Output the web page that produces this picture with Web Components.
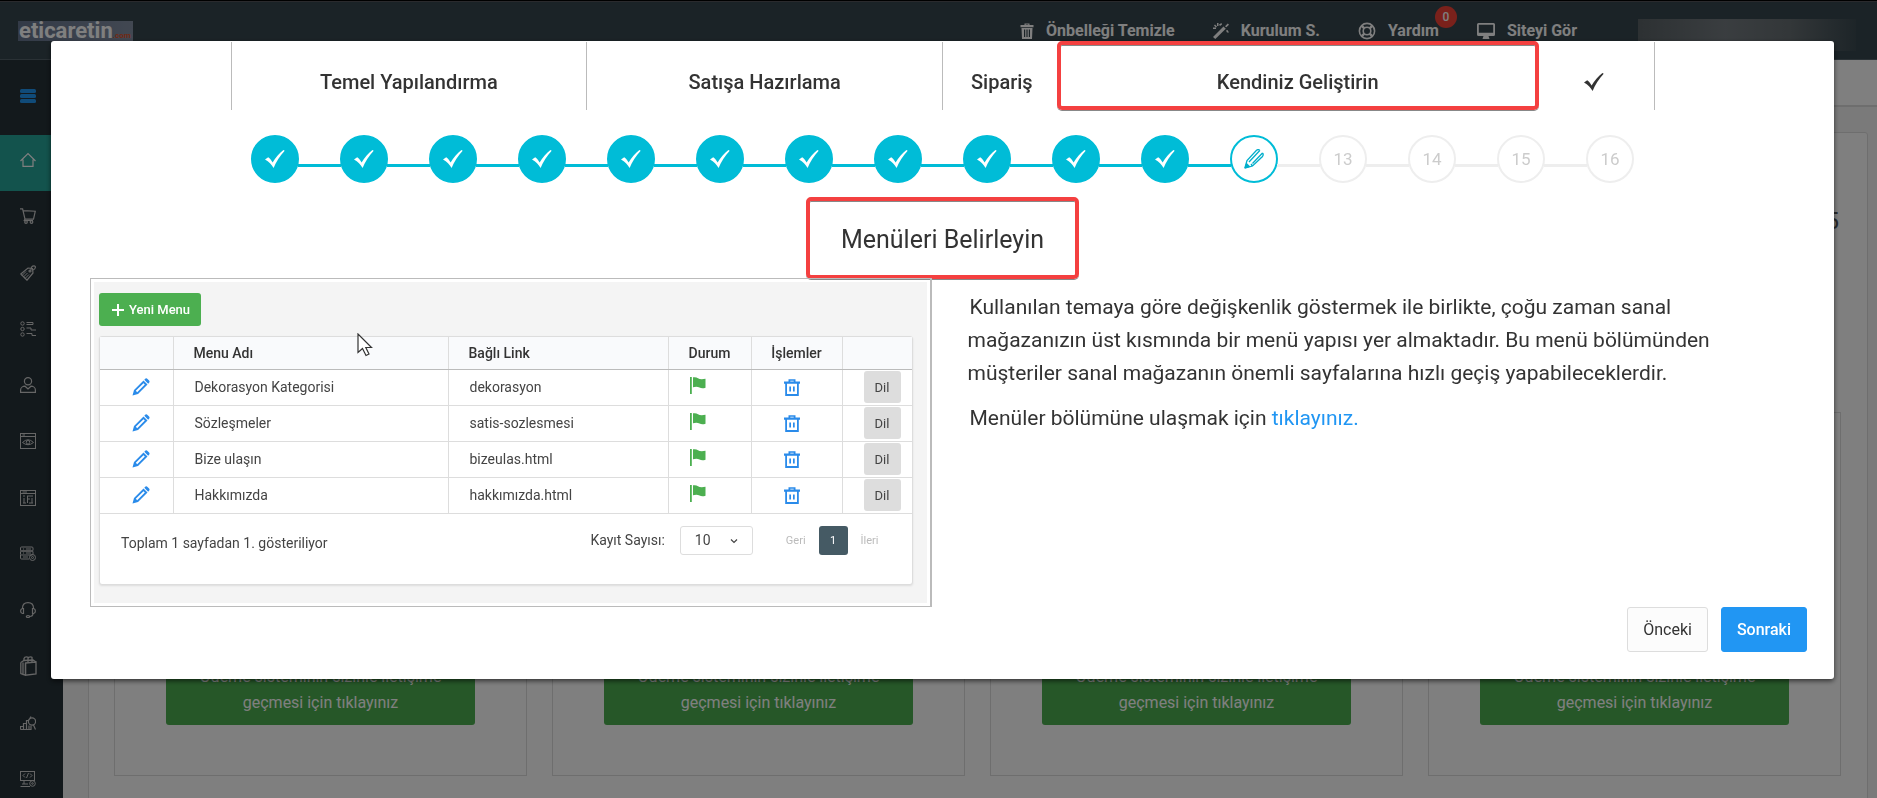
<!DOCTYPE html>
<html lang="tr">
<head>
<meta charset="utf-8">
<title>eticaretin.com – Kurulum Sihirbazı</title>
<meta name="viewport" content="width=device-width, initial-scale=1">
<style>
  body { margin: 0; font-family: Roboto, "Noto Sans", sans-serif; color: #333; background: #f5f5f5; }
</style>
</head>
<body>
<store-admin></store-admin>

<script>
const define = (name, html, setup) => {
  const template = document.createElement('template');
  template.innerHTML = `<style>*{box-sizing:border-box}</style>${html}`;
  customElements.define(name, class extends HTMLElement {
    connectedCallback() {
      if (this.shadowRoot) return;
      const root = this.attachShadow({ mode: 'open' });
      root.append(template.content.cloneNode(true));
      if (setup) setup(this, root);
    }
  });
};

/* Icons: [viewBox, markup]. Line icons are drawn with currentColor strokes. */
const line = (body, w = 1.2) => `<g fill="none" stroke="currentColor" stroke-width="${w}">${body}</g>`;
const ICONS = {
  bars: ['0 0 16 14', '<g fill="currentColor"><rect width="16" height="4" rx="1.5"/><rect y="5" width="16" height="4" rx="1.5"/><rect y="10" width="16" height="4" rx="1.5"/></g>'],
  home: ['0 0 16 16', line('<path d="M.5 9 8 1.6 15.500 9M3 7.500V14.400H13V7.500"/>')],
  cart: ['0 0 16 16', line('<path d="M0 .8H2.600L5 11.200H13.500L15.300 3.200 3.300 2.600"/><circle cx="6" cy="14" r="1.300"/><circle cx="11.500" cy="14" r="1.300"/><path d="M5 11.200 4.300 12.500H13"/>')],
  tags: ['0 0 16 16', line('<path d="M.8 9 8 3 12.500 3.500 13 8 7 15.200Z"/><path d="M2 10.500 6 6.500M3.500 12 7.500 8M5 13.500 9 9.500" stroke-width="1"/><circle cx="10" cy="6" r="1"/><path d="M11 5C11 2 12 .8 14 .8 16 .8 16 4 13 5"/>')],
  list: ['0 0 16 16', line('<circle cx="2.500" cy="2.500" r="1.700"/><circle cx="2.500" cy="8" r="1.700"/><circle cx="2.500" cy="13.500" r="1.700"/><path d="M6.500 1.500H13V3.500H6.500M6.500 7H11V9H16M6.500 12.500H12V14.500H16"/>', 1)],
  user: ['0 0 16 16', line('<circle cx="8" cy="4.200" r="3.600"/><path d="M.6 15.400V13C.6 10.500 3 9.200 5 9.200L8 12 11 9.200C13 9.200 15.400 10.500 15.400 13V15.400Z"/>')],
  eye: ['0 0 16 16', line('<rect x=".5" y=".5" width="15" height="15"/><path d="M.5 3.500H15.500M2.500 2H5M2.500 9.500Q8 4 13.500 9.500 8 14 2.500 9.500Z"/><circle cx="8" cy="9.300" r="1.800"/>', 1)],
  layout: ['0 0 16 16', line('<rect x=".5" y=".5" width="15" height="15"/><path d="M.5 3.500H15.500M2.500 2H7M3 6H5M7 6H13M4 8V13M7.500 6V13M7 9H10M12 8V13M3 13H6M9 13H13"/>', 1)],
  server: ['0 0 16 16', line('<rect x=".5" y="1" width="12.500" height="4" rx="1"/><rect x=".5" y="5" width="12.500" height="4" rx="1"/><path d="M9 13H1.500Q.5 13 .5 12V9M3 3H4M6 3H11M3 7H4M6 7H11M3 11H8"/><circle cx="12.500" cy="11.500" r="3"/><circle cx="12.500" cy="11.500" r="1"/>', 1)],
  headset: ['0 0 16 16', line('<path d="M2.500 7V6C2.500 2.500 5 .6 8 .6S13.500 2.500 13.500 6V7"/><path d="M3.500 6.500V11.500H2.500Q.6 11 .6 9T2.500 6.500ZM12.500 6.500V11.500H13.500Q15.400 11 15.400 9T13.500 6.500ZM13 11.500Q13 14.500 9.500 14.500"/><ellipse cx="8" cy="14.500" rx="1.700" ry="1"/>')],
  bag: ['0 0 17 20', line('<path d="M5.500 7 16 6V18L5.500 19.200Z"/><path d="M5.500 7V19.200M3 6.500V18.500L5.500 19.200M.8 6.500V17.500L3 18.500M.8 6.500 4 4.500 13 4 16 6"/><path d="M4 5V2.500Q4.500.8 6.500.8T8 2.500V6M8 2.500Q8.500.8 10.500.8T12 2.500V6"/>', 1.300)],
  chart: ['0 0 16 14', line('<path d="M.5 13.500V10.500H3.500V13.500M3.500 10.500V7.500H6.500V13.500M6.500 7.500V4.500H9M9 13.500V9.500M.5 13.500H11V10"/><circle cx="12" cy="5.500" r="3.600"/><path d="M10 2 11 .5M13.500 9 15.500 13.500"/>')],
  dev: ['0 0 16 16', line('<rect x=".5" y=".5" width="14" height="9"/><path d="M5 2.500 3 4.500 5 6.500M10 2.500 12 4.500 10 6.500M8.500 2 6.500 7M2 13H8M.5 15.500H10M4 10V13"/><circle cx="12.500" cy="12.500" r="2.800"/><circle cx="12.500" cy="12.500" r=".8"/>', 1)],
  trashTop: ['0 0 14 16', '<path fill="currentColor" fill-rule="evenodd" d="M4.500 2V.5H9.500V2H13.500V4.200H.5V2ZM5.700 2H8.300V1.500H5.700ZM1.500 5H12.500L12 16H2ZM4 6.500V14H5.200V6.500ZM6.400 6.500V14H7.600V6.500ZM8.800 6.500V14H10V6.500Z"/>'],
  wand: ['0 0 16 16', '<g fill="currentColor"><path d="M0 14 10.500 3.500 12.800 5.800 2.300 16Z"/><path d="M12 3.200 13.300 4.300 16 1.800 14.800.6ZM4 0H5.500V3H4ZM1 2.500 2 1.500 4 3.500 3 4.500ZM0 4.500H3V6H0ZM6 1.500 8.500 0 9 1.500 7 3ZM13 7.500 14.500 7 16 9.500H14Z"/></g>'],
  buoy: ['0 0 18 18', line('<circle cx="9" cy="9" r="7.600"/><circle cx="9" cy="9" r="3.800"/><path stroke-width="2.400" d="M3.800 3.800 6.300 6.300M14.200 3.800 11.700 6.300M3.800 14.200 6.300 11.700M14.200 14.200 11.700 11.700"/>', 1.600)],
  monitor: ['0 0 18 16', '<path fill="currentColor" fill-rule="evenodd" d="M1.500 0H16.500Q18 0 18 1.500V11.500Q18 13 16.500 13H11.500L12.500 16H5.500L6.500 13H1.500Q0 13 0 11.500V1.500Q0 0 1.500 0ZM1.800 1.800V9.800H16.200V1.800Z"/>'],
  check: ['0 0 20 18', '<path fill="currentColor" d="M19.700.8C15 6 11 12 8.600 18 6.500 14.700 4 11.500 0 9.600L3.200 7.200C5 8.500 6.500 10.300 7.600 12.400 10.500 7.500 14 3.500 18.400 0Z"/>'],
  pencil: ['0 0 20 20', line('<path d="M.8 19.200 3 11.500 12.500 1.200C14 .2 15.500.6 15.800 1.500M.8 19.200 8.500 17 18.500 7.500C19.500 6 19.300 4.500 18.500 4M5 13 15.800 1.500M18.500 4 8.500 14.500M8.500 17 7 15" stroke-width="1.300"/><path fill="currentColor" stroke="none" d="M.5 19.500 2.300 13.500 6.500 17.800Z"/>')],
  edit: ['0 0 18 18', '<path fill="currentColor" fill-rule="evenodd" d="M.5 17.500 2 12 11.500 2.500 15.500 6.500 6 16ZM3.800 12.700 11.500 5.200 12.800 6.500 5.200 14.200ZM12.300 1.700 13.500.6Q14.500 0 15.500.9L17.100 2.500Q18 3.500 17.300 4.500L16.200 5.700Z"/>'],
  flag: ['0 0 16 17', '<path fill="currentColor" d="M0 0H1.800V17H0ZM3 .3Q6-.3 8 1.200T15.500 1.800V10.800Q12 12 9.500 10.600T3 10.300Z"/>'],
  trash: ['0 0 16 17', '<path fill="currentColor" fill-rule="evenodd" d="M4.500 2.500V.3H11.500V2.500H16V4.700H14.800V17H1.200V4.700H0V2.500ZM6.300 2.500H9.700V1.800H6.300ZM3 4.700V15H13V4.700ZM5.300 7.500H7V12.500H5.300ZM9 7.500H10.700V12.500H9Z"/>'],
  plus: ['0 0 12 12', '<path fill="currentColor" d="M5 0H7V5H12V7H7V12H5V7H0V5H5Z"/>'],
  chevron: ['0 0 8 6', line('<path d="M1 1.500 4 4.500 7 1.500"/>')],
  cursor: ['0 0 16 24', '<path fill="#fff" stroke="#333" stroke-width="1.200" d="M1 1V19.500L5.500 15.500 9 22.500 12 21 8.800 14.500H14.500Z"/>']
};

define('ui-icon', `
  <style>
    :host { display: inline-flex; flex: none; }
    svg { display: block; width: var(--w, 16px); height: var(--h, 16px); }
  </style>
  <svg aria-hidden="true"></svg>`, (el, root) => {
  const [box, body] = ICONS[el.getAttribute('name')];
  const svg = root.querySelector('svg');
  const [, , w, h] = box.split(' ');
  svg.setAttribute('viewBox', box);
  svg.innerHTML = body;
  el.style.setProperty('--w', w + 'px');
  el.style.setProperty('--h', h + 'px');
});

define('admin-header', `
  <style>
    :host { display: block; }
    header { display: flex; align-items: flex-start; height: 60px; background: #37474f; color: #fff;
      border-top: 1px solid #000; border-bottom: 1px solid #55626a; box-shadow: inset 0 1px #55555a; }
    .logo { margin: 20px 0 0 18px; padding-left: 1px; width: 115px; height: 20px; background: linear-gradient(90deg, #66758f, #8490a4);
      color: #fff; text-decoration: none; font-weight: 700; font-size: 22px; line-height: 20px; white-space: nowrap; }
    .logo small { font-size: 8px; color: #e0532a; }
    nav { display: flex; margin: 20px 0 0 auto; gap: 38px; font-size: 16px; font-weight: 700; line-height: 20px; }
    nav a { position: relative; display: flex; align-items: center; gap: 12px; color: inherit; text-decoration: none; }
    .badge { position: absolute; right: -18px; top: -15px; width: 22px; height: 22px; border-radius: 50%;
      background: #f44336; font-size: 12px; font-weight: 500; line-height: 22px; text-align: center; }
    .account { width: 218px; height: 32px; margin: 18px 21px 0 61px;
      background: linear-gradient(90deg, #5a6266, #747b80 40%, #666e72 70%, #3b4a51); }
  </style>
  <header>
    <a class="logo" href="#">eticaretin<small>.com</small></a>
    <nav>
      <a href="#"><ui-icon name="trashTop"></ui-icon>Önbelleği Temizle</a>
      <a href="#"><ui-icon name="wand"></ui-icon>Kurulum S.</a>
      <a href="#"><ui-icon name="buoy"></ui-icon>Yardım<span class="badge">0</span></a>
      <a href="#"><ui-icon name="monitor"></ui-icon>Siteyi Gör</a>
    </nav>
    <div class="account"></div>
  </header>`);

define('admin-sidebar', `
  <style>
    :host { display: block; flex: none; width: 63px; background: #263238; color: #ccc; }
    button { display: grid; place-items: center; width: 56px; height: 75px; padding: 0 0 3px; border: 0; background: none; color: #2196f3; }
    nav { display: grid; grid-auto-rows: 1fr; min-height: 675px; }
    nav a { display: flex; align-items: center; padding: 0 0 6px 20px; color: inherit; }
    nav a.active { background: #26a69a; color: #fff; }
  </style>
  <button type="button" aria-label="Menüyü aç"><ui-icon name="bars"></ui-icon></button>
  <nav></nav>`, (el, root) => {
  const items = ['home', 'cart', 'tags', 'list', 'user', 'eye', 'layout', 'server', 'headset', 'bag', 'chart', 'dev'];
  root.querySelector('nav').innerHTML = items.map((name, i) =>
    `<a href="#" class="${i ? '' : 'active'}"><ui-icon name="${name}"></ui-icon></a>`).join('');
});

define('contact-card', `
  <style>
    :host { display: flex; align-items: flex-end; min-height: 364px; padding: 0 51px 50px; border: 1px solid #ddd; box-sizing: border-box; }
    button { width: 100%; padding: 11px 20px 9px; border: 0; border-radius: 3px; background: #4caf50; color: #fff;
      font: 400 16px/26px Roboto, "Noto Sans", sans-serif; }
  </style>
  <button type="button"><slot></slot></button>`);

define('admin-dashboard', `
  <style>
    :host { display: block; flex: 1; min-width: 0; }
    .bar { height: 47px; background: #fff; border-bottom: 2px solid #ddd; }
    .panel { margin: 25px 9px 0 25px; padding: 72px 26px 26px 25px; min-height: 700px; background: #fff; border: 1px solid #ddd; border-radius: 3px; }
    .count { padding-right: 2px; text-align: right; font-size: 24px; line-height: 32px; color: #555; }
    .cards { display: grid; grid-template-columns: repeat(4, 1fr); gap: 25px; margin-top: 175px; }
  </style>
  <div class="bar"></div>
  <div class="panel">
    <div class="count">5</div>
    <div class="cards"></div>
  </div>`, (el, root) => {
  root.querySelector('.cards').innerHTML =
    '<contact-card>Ödeme sisteminin sizinle iletişime geçmesi için tıklayınız</contact-card>'.repeat(4);
});

define('wizard-tabs', `
  <style>
    :host { display: block; }
    ol { display: grid; grid-template-columns: 3fr 3fr 1fr 4fr 1fr; margin: 0; padding: 0; list-style: none;
      border-right: 1px solid #bbb; }
    li { position: relative; display: flex; align-items: center; justify-content: center; height: 68px; padding-top: 12px;
      font-size: 20px; font-weight: 500; white-space: nowrap; }
    li.group { border-left: 1px solid #bbb; }
    li.marked::after { content: ""; position: absolute; inset: -1px -4px 0; border: 4px solid #f44040;
      border-radius: 5px; box-shadow: 0 1px #888, inset 0 1px #888; }
  </style>
  <ol>
    <li class="group">Temel Yapılandırma</li>
    <li class="group">Satışa Hazırlama</li>
    <li class="group">Sipariş</li>
    <li class="marked">Kendiniz Geliştirin</li>
    <li><ui-icon name="check"></ui-icon></li>
  </ol>`);

define('wizard-steps', `
  <style>
    :host { display: block; }
    ol { display: flex; margin: 0; padding: 0; list-style: none; }
    li { position: relative; flex: 1; display: flex; justify-content: center; }
    li:not(:last-child)::after { content: ""; position: absolute; top: 29px; left: calc(50% + 23px); right: calc(-50% + 23px);
      height: 3px; background: #eee; }
    li.done:not(:last-child)::after { background: #00bcd7; }
    span { display: grid; place-items: center; width: 48px; height: 48px; border: 2px solid #eee; border-radius: 50%;
      color: #ccc; font-size: 17px; }
    .done span { background: #00bcd7; border-color: #00bcd7; color: #fff; }
    .current span { border-color: #00bcd7; color: #00aecb; }
  </style>
  <ol></ol>`, (el, root) => {
  const current = Number(el.getAttribute('current'));
  const total = Number(el.getAttribute('total'));
  let html = '';
  for (let i = 1; i <= total; i++) {
    html += i < current ? '<li class="done"><span><ui-icon name="check"></ui-icon></span></li>'
      : i === current ? '<li class="current"><span><ui-icon name="pencil"></ui-icon></span></li>'
      : `<li><span>${i}</span></li>`;
  }
  root.querySelector('ol').innerHTML = html;
});

define('menu-preview', `
  <style>
    :host { display: block; }
    .frame { position: relative; border: 1px solid #bbb; border-right-width: 2px; padding: 3px; }
    .page { height: 321px; padding: 11px 14px 0 5px; background: #f4f4f4; font-size: 14px; color: #444; }
    .add { display: flex; align-items: center; gap: 5px; height: 33px; padding: 0 11px 0 13px; border: 0; border-radius: 3px;
      background: #4caf50; color: #fff; font: 500 13px Roboto, sans-serif; white-space: nowrap; }
    .box { margin-top: 10px; height: 249px; background: #fff; border: 1px solid #ddd; border-radius: 3px; box-shadow: 0 1px 2px #ddd; }
    table { width: 100%; border-collapse: collapse; table-layout: fixed; border-bottom: 1px solid #bbb; }
    th, td { height: 36px; padding: 0 0 0 21px; border: 1px solid #ddd; text-align: left; font-weight: 400; }
    tr > :first-child { border-left: 0; }
    tr > :last-child { border-right: 0; }
    th { height: 32px; padding-left: 20px; border-top: 0; border-bottom-color: #bbb; background: #f9fafc; font-weight: 500; color: #333; }
    ui-icon { display: flex; }
    td:nth-child(1) { padding: 0 0 0 9px; }
    td:nth-child(5) { padding: 0 9px 0 0; }
    th:nth-child(5) { padding: 0; text-align: center; }
    td:nth-child(1) ui-icon, td:nth-child(5) ui-icon { color: #2a8bea; justify-content: center; }
    td:nth-child(4) ui-icon { color: #4caf50; margin-bottom: 3px; }
    .lang { display: block; width: 37px; height: 32px; padding: 0; border: 0; border-radius: 3px; background: #ddd; color: #444;
      font: 400 13px Roboto, sans-serif; }
    .foot { display: flex; align-items: center; padding: 12px 33px 0 21px; height: 41px; }
    .total { margin: 5px auto 0 0; }
    label { margin-right: 15px; }
    .pick { position: relative; margin-right: 33px; }
    select { display: block; appearance: none; width: 73px; height: 29px; padding: 0 0 0 14px; border: 1px solid #ddd; border-radius: 3px;
      background: #fff; color: #444; font: 400 14px Roboto, sans-serif; }
    .pick ui-icon { position: absolute; right: 15px; top: 12px; }
    .pager { display: flex; align-items: center; gap: 13px; font-size: 11px; }
    .pager a { color: #bbb; text-decoration: none; }
    .pager .on { width: 29px; border-radius: 3px; background: #455a64; color: #fff; line-height: 29px; text-align: center; }
    .cursor { position: absolute; left: 266px; top: 54px; }
  </style>
  <div class="frame">
    <div class="page">
      <button class="add" type="button"><ui-icon name="plus"></ui-icon>Yeni Menu</button>
      <div class="box">
        <table>
          <colgroup><col style="width:73px"><col style="width:275px"><col style="width:220px"><col style="width:83px"><col style="width:91px"><col></colgroup>
          <thead><tr><th></th><th>Menu Adı</th><th>Bağlı Link</th><th>Durum</th><th>İşlemler</th><th></th></tr></thead>
          <tbody></tbody>
        </table>
        <div class="foot">
          <span class="total">Toplam 1 sayfadan 1. gösteriliyor</span>
          <label for="size">Kayıt Sayısı:</label>
          <div class="pick"><select id="size"><option>10</option><option>25</option></select><ui-icon name="chevron"></ui-icon></div>
          <div class="pager"><a href="#">Geri</a><a class="on" href="#">1</a><a href="#">İleri</a></div>
        </div>
      </div>
    </div>
    <ui-icon class="cursor" name="cursor"></ui-icon>
  </div>`, (el, root) => {
  const rows = [['Dekorasyon Kategorisi', 'dekorasyon'], ['Sözleşmeler', 'satis-sozlesmesi'],
    ['Bize ulaşın', 'bizeulas.html'], ['Hakkımızda', 'hakkımızda.html']];
  root.querySelector('tbody').innerHTML = rows.map(([name, link]) => `<tr>
    <td><ui-icon name="edit"></ui-icon></td><td>${name}</td><td>${link}</td>
    <td><ui-icon name="flag"></ui-icon></td><td><ui-icon name="trash"></ui-icon></td>
    <td><button class="lang" type="button">Dil</button></td></tr>`).join('');
});

define('setup-wizard', `
  <style>
    :host { display: block; background: #fff; border-radius: 3px; box-shadow: 0 2px 5px rgba(0,0,0,.6); padding: 1px 0 27px; color: #333; }
    wizard-tabs, wizard-steps { width: 80%; max-width: 1424px; margin: 0 auto; }
    wizard-steps { margin-top: 25px; }
    h2 { width: fit-content; margin: 14px auto -1px; padding: 3px 31px 0; position: relative; border: 4px solid #f44040; border-radius: 5px;
      box-shadow: 0 1px #888, inset 0 1px #888; font-weight: 400; font-size: 25px; line-height: 71px; }
    .body { display: grid; grid-template-columns: 841fr 817fr; gap: 36px; padding: 0 49px 0 39px; }
    .text { padding-top: 13px; font-size: 21px; line-height: 33px; }
    p { margin: 0 0 12px; text-indent: 2px; }
    .text a { color: #2196f3; text-decoration: none; }
    footer { display: flex; justify-content: flex-end; gap: 13px; padding-right: 27px; }
    button { height: 45px; padding: 0 15px; border: 1px solid #ddd; border-radius: 3px; background: #fcfcfc; color: #333;
      font: 400 16px Roboto, sans-serif; }
    button.next { border-color: #2196f3; background: #2196f3; color: #fff; font-weight: 500; }
  </style>
  <wizard-tabs></wizard-tabs>
  <wizard-steps current="12" total="16"></wizard-steps>
  <h2>Menüleri Belirleyin</h2>
  <div class="body">
    <menu-preview></menu-preview>
    <div class="text">
      <p>Kullanılan temaya göre değişkenlik göstermek ile birlikte, çoğu zaman sanal mağazanızın üst kısmında bir menü yapısı yer almaktadır. Bu menü bölümünden müşteriler sanal mağazanın önemli sayfalarına hızlı geçiş yapabileceklerdir.</p>
      <p>Menüler bölümüne ulaşmak için <a href="#">tıklayınız.</a></p>
    </div>
  </div>
  <footer><button type="button">Önceki</button><button class="next" type="button">Sonraki</button></footer>`);

define('store-admin', `
  <style>
    :host { display: flex; flex-direction: column; height: 100vh; overflow: hidden; }
    main { display: flex; flex: 1; min-height: 0; }
    .overlay { position: fixed; inset: 0; padding: 41px 43px 0 51px; background: rgba(0,0,0,.5); }
  </style>
  <admin-header></admin-header>
  <main>
    <admin-sidebar></admin-sidebar>
    <admin-dashboard></admin-dashboard>
  </main>
  <div class="overlay" role="dialog" aria-modal="true" aria-label="Kurulum"><setup-wizard></setup-wizard></div>`);
</script>
</body>
</html>
